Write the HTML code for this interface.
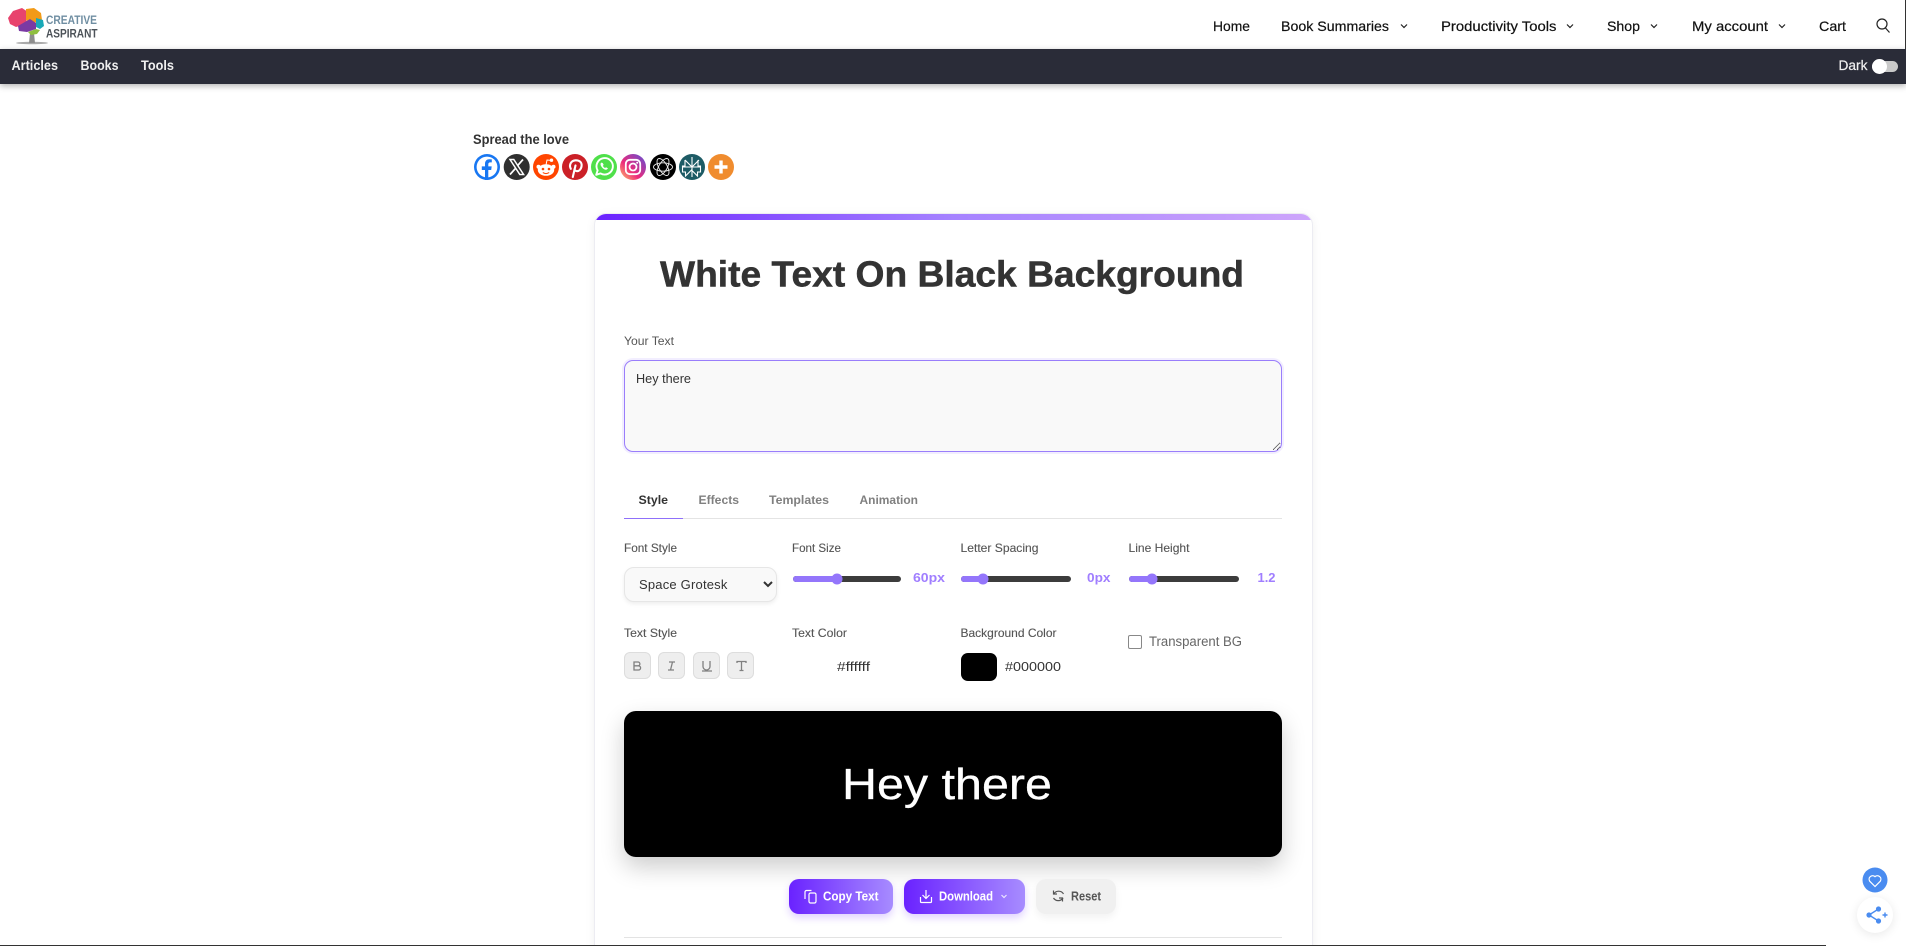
<!DOCTYPE html>
<html lang="en"><head><meta charset="utf-8"><title>White Text On Black Background</title>
<style>
html,body{margin:0;padding:0;background:#fff;width:1906px;height:946px;overflow:hidden}
body{position:relative;font-family:"Liberation Sans",sans-serif}
svg.p{position:absolute;left:0;top:0}
.a{position:absolute;box-sizing:border-box}
#bar{left:0;top:49px;width:1906px;height:35px;background:#2a2c38;box-shadow:0 2px 6px rgba(0,0,0,.3)}
#card{left:594px;top:213px;width:719px;height:760px;background:#fff;border-radius:12px;border:1px solid #ececf2;box-shadow:0 2px 10px rgba(0,0,0,.06);overflow:hidden}
#card i{display:block;height:5.5px;background:linear-gradient(90deg,#6a22ff,#a582ff 50%,#cda5fb)}
textarea{left:624px;top:360px;width:658px;height:92px;border:1.5px solid #9a7efb;border-radius:9px;background:#f9f9f9;box-shadow:0 0 0 2px rgba(148,118,251,.12);margin:0;padding:0;outline:0;color:transparent;resize:both}
select{left:624px;top:567px;width:153px;height:35px;border:1px solid #e6e6e6;border-radius:10px;background:#f9f9f9;box-shadow:0 2px 4px rgba(0,0,0,.07);padding:0 0 0 10px;font:13px "Liberation Sans",sans-serif;color:#333;letter-spacing:.2px}
#prev{left:624px;top:711px;width:658px;height:146px;background:#000;border-radius:12px;box-shadow:0 10px 24px rgba(0,0,0,.2)}
.b{top:879px;height:35px;border-radius:10px;background:linear-gradient(90deg,#6a22ff,#a78cff);box-shadow:0 4px 8px rgba(106,34,255,.2)}
.s{top:652px;width:27px;height:27px;background:#eee;border:1px solid #ddd;border-radius:6px}
</style></head><body>
<div class="a" id="bar"></div>
<div class="a" id="card"><i></i></div>
<textarea class="a">Hey there</textarea>
<select class="a"><option>Space Grotesk</option></select>
<div class="a" id="prev"></div>
<div class="a b" style="left:789px;width:104px"></div>
<div class="a b" style="left:904px;width:121px"></div>
<div class="a b" style="left:1036px;width:80px;background:#f0f0f0;box-shadow:0 4px 8px rgba(0,0,0,.05)"></div>
<div class="a s" style="left:624px"></div><div class="a s" style="left:658px"></div><div class="a s" style="left:693px"></div><div class="a s" style="left:727px"></div>
<div class="a" style="left:961px;top:653px;width:36px;height:28px;background:#000;border-radius:7px"></div>
<div class="a" style="left:1128px;top:635px;width:14px;height:14px;border:1px solid #888;border-radius:2px;background:#fff"></div>
<div class="a" style="left:1857px;top:897px;width:36px;height:36px;border-radius:50%;background:#fff;box-shadow:0 2px 10px rgba(0,0,0,.09)"></div>

<svg class="p" width="1906" height="946" viewBox="0 0 1906 946" xmlns="http://www.w3.org/2000/svg" font-family="'Liberation Sans',sans-serif">
<defs>
<linearGradient id="ig" x1="0" y1="1" x2="1" y2="0"><stop offset="0" stop-color="#fdc468"/><stop offset=".4" stop-color="#ee2a7b"/><stop offset="1" stop-color="#5b51d8"/></linearGradient>
</defs>

<!-- logo -->
<g>
<ellipse cx="32" cy="43" rx="16" ry="1.2" fill="#aaa"/>
<path d="M30 33h4l1 10h-6z" fill="#8d8d8d"/>
<path d="M8 18l5-7 9-3 6 4-2 12-10 3-6-3z" fill="#e8436d"/>
<path d="M26 9l8-1 7 5 1 7-8 3-8-3z" fill="#f29a17"/>
<path d="M18 26l12-7 6 4 0 6-9 3-8-1z" fill="#7a3aa3"/>
<path d="M36 18l7 2 1 6-4 3-4-2z" fill="#18a9b8"/>
<path d="M28 32l8-3 4 1-3 4-6 1z" fill="#8fbf3f"/>
<text x="46" y="24" font-size="11.5" font-weight="700" fill="#6f8ea2" textLength="51" lengthAdjust="spacingAndGlyphs">CREATIVE</text>
<text x="46" y="37.5" font-size="11.5" font-weight="700" fill="#4c5258" textLength="51.5" lengthAdjust="spacingAndGlyphs">ASPIRANT</text>
</g>

<!-- main nav -->
<g font-size="14" fill="#111" font-weight="400" stroke="#111" stroke-width=".2">
<text x="1213" y="31" textLength="37" lengthAdjust="spacingAndGlyphs">Home</text>
<text x="1281" y="31" textLength="108" lengthAdjust="spacingAndGlyphs">Book Summaries</text>
<text x="1441" y="31" textLength="115.5" lengthAdjust="spacingAndGlyphs">Productivity Tools</text>
<text x="1607" y="31" textLength="33" lengthAdjust="spacingAndGlyphs">Shop</text>
<text x="1692" y="31" textLength="76" lengthAdjust="spacingAndGlyphs">My account</text>
<text x="1819" y="31" textLength="27" lengthAdjust="spacingAndGlyphs">Cart</text>
</g>
<g fill="none" stroke="#222" stroke-width="1.2">
<path d="M1401 24.5l3 3 3-3M1567 24.5l3 3 3-3M1651 24.5l3 3 3-3M1779 24.5l3 3 3-3"/>
<circle cx="1882" cy="24" r="5"/><path d="M1885.5 28l4 4.5"/>
</g>

<!-- sub nav -->
<g font-size="13.5" font-weight="700" fill="#f0f0f0">
<text x="11.5" y="70" textLength="46.5" lengthAdjust="spacingAndGlyphs">Articles</text>
<text x="80.5" y="70" textLength="38" lengthAdjust="spacingAndGlyphs">Books</text>
<text x="141" y="70" textLength="33" lengthAdjust="spacingAndGlyphs">Tools</text>
<text x="1838.5" y="70" font-weight="400" stroke="#f0f0f0" stroke-width=".2" textLength="29" lengthAdjust="spacingAndGlyphs">Dark</text>
</g>
<rect x="1872" y="61" width="26" height="11" rx="5.5" fill="#c9c9c9"/>
<circle cx="1879.5" cy="66.5" r="7.5" fill="#fff"/>

<!-- spread the love -->
<text x="473" y="144" font-size="13.5" font-weight="700" fill="#333" textLength="96" lengthAdjust="spacingAndGlyphs">Spread the love</text>
<circle cx="487" cy="167" r="13" fill="#1877f2"/><circle cx="487" cy="167" r="10.4" fill="#fff"/>
<path d="M485 180v-10h-3.2v-3.6H485v-2.6c0-3 1.8-4.6 4.4-4.6l2.4.2v3h-1.6c-1.4 0-1.9.9-1.9 1.9v2.1h3.4l-.5 3.6h-2.9v10z" fill="#1877f2"/>
<circle cx="516.7" cy="167" r="13" fill="#2f2f2f"/>
<path d="M510 159.5h3.8l9.8 15h-3.8z" fill="none" stroke="#fff" stroke-width="1.5"/><path d="M523 159.5l-5.6 6.3M515.6 168.3l-5.6 6.2" stroke="#fff" stroke-width="1.7"/>
<circle cx="546" cy="167" r="13" fill="#ff4500"/>
<ellipse cx="546" cy="170" rx="8.2" ry="5.8" fill="#fff"/><circle cx="538.5" cy="166.8" r="2" fill="#fff"/><circle cx="553.5" cy="166.8" r="2" fill="#fff"/>
<circle cx="551.5" cy="160.2" r="1.7" fill="#fff"/><path d="M546 165l1-5 4 .4" fill="none" stroke="#fff" stroke-width="1"/>
<circle cx="543" cy="169" r="1.3" fill="#ff4500"/><circle cx="549" cy="169" r="1.3" fill="#ff4500"/><path d="M542.8 172.6q3.2 2 6.4 0" fill="none" stroke="#ff4500" stroke-width="1"/>
<circle cx="575" cy="167" r="13" fill="#cb2027"/>
<path d="M572.8 177l2.7-11.5M570.8 168.8c-2.2-4.2.5-8.3 4.8-8.5 4-.2 6.4 2.2 6 5.6-.4 3.4-2.6 5.6-5 5.2-1.2-.2-2-1-2.2-1.8" fill="none" stroke="#fff" stroke-width="2.1" stroke-linecap="round"/>
<circle cx="604" cy="167" r="13" fill="#4fe04a"/>
<path d="M596.2 174.8l1.4-4.4a8.2 8.2 0 1 1 3 3z" fill="none" stroke="#fff" stroke-width="1.9" stroke-linejoin="round"/>
<path d="M601.2 162.6c-.8.8-1 2 0 3.6 1 1.7 2.5 3 4.2 3.5 1.2.3 2.2-.4 2.5-1.4l-1.9-1.1-.9.8c-1-.4-1.8-1.2-2.2-2.2l.8-.9-1-1.9z" fill="#fff"/>
<circle cx="633" cy="167" r="13" fill="url(#ig)"/>
<rect x="625.8" y="159.8" width="14.4" height="14.4" rx="4" fill="none" stroke="#fff" stroke-width="1.8"/><circle cx="633" cy="167" r="3.5" fill="none" stroke="#fff" stroke-width="1.8"/><circle cx="637.2" cy="162.8" r="1" fill="#fff"/>
<circle cx="663" cy="167" r="13" fill="#000"/>
<g fill="none" stroke="#eee" stroke-width=".9"><ellipse cx="663" cy="167" rx="9.5" ry="4.2"/><ellipse cx="663" cy="167" rx="9.5" ry="4.2" transform="rotate(60 663 167)"/><ellipse cx="663" cy="167" rx="9.5" ry="4.2" transform="rotate(120 663 167)"/></g>
<circle cx="692" cy="167" r="13" fill="#1d5b65"/>
<path d="M692 157v20M685 160l7 7 7-7M685 160v6l-2.500 0v6l3 0v4l6-6 6 6v-4l3 0v-6l-2.500 0v-6M692 167l-9 0M692 167l9 0" fill="none" stroke="#fff" stroke-width="1.100"/>
<circle cx="721" cy="167" r="13" fill="#f08c2e"/><path d="M721 160.500v13M714.500 167h13" stroke="#fff" stroke-width="3.400"/>

<!-- title -->
<text x="660" y="286.500" font-size="36" font-weight="700" fill="#333" stroke="#333" stroke-width=".5" textLength="584" lengthAdjust="spacingAndGlyphs">White Text On Black Background</text>

<text x="624" y="345" font-size="12" fill="#555" textLength="50" lengthAdjust="spacingAndGlyphs">Your Text</text>
<text x="636" y="383" font-size="12.500" fill="#333" textLength="55" lengthAdjust="spacingAndGlyphs">Hey there</text>

<!-- tabs -->
<g font-size="12.300" font-weight="700" fill="#808080">
<text x="638.500" y="504" fill="#333" textLength="29.500" lengthAdjust="spacingAndGlyphs">Style</text>
<text x="698.500" y="504" textLength="40.500" lengthAdjust="spacingAndGlyphs">Effects</text>
<text x="769" y="504" textLength="60" lengthAdjust="spacingAndGlyphs">Templates</text>
<text x="859.500" y="504" textLength="58.500" lengthAdjust="spacingAndGlyphs">Animation</text>
</g>
<rect x="624" y="518" width="658" height="1" fill="#e4e4e4"/>
<rect x="624" y="518" width="59" height="1" fill="#8f70fa"/>

<!-- labels -->
<g font-size="12" fill="#555" stroke="#555" stroke-width=".12">
<text x="624" y="552" textLength="53" lengthAdjust="spacingAndGlyphs">Font Style</text>
<text x="792" y="552" textLength="49" lengthAdjust="spacingAndGlyphs">Font Size</text>
<text x="960.500" y="552" textLength="78" lengthAdjust="spacingAndGlyphs">Letter Spacing</text>
<text x="1128.500" y="552" textLength="61" lengthAdjust="spacingAndGlyphs">Line Height</text>
<text x="624" y="637" textLength="53" lengthAdjust="spacingAndGlyphs">Text Style</text>
<text x="792" y="637" textLength="55" lengthAdjust="spacingAndGlyphs">Text Color</text>
<text x="960.500" y="637" textLength="96" lengthAdjust="spacingAndGlyphs">Background Color</text>
</g>

<!-- sliders -->
<g>
<rect x="793" y="576" width="108" height="6" rx="3" fill="#3c3c3c"/><rect x="793" y="576" width="44" height="6" rx="3" fill="#9476fb"/><circle cx="837" cy="579" r="5.500" fill="#9476fb"/>
<rect x="961" y="576" width="110" height="6" rx="3" fill="#3c3c3c"/><rect x="961" y="576" width="22" height="6" rx="3" fill="#9476fb"/><circle cx="983" cy="579" r="5.500" fill="#9476fb"/>
<rect x="1129" y="576" width="110" height="6" rx="3" fill="#3c3c3c"/><rect x="1129" y="576" width="23" height="6" rx="3" fill="#9476fb"/><circle cx="1152" cy="579" r="5.500" fill="#9476fb"/>
</g>
<g font-size="13" font-weight="700" fill="#a07eff">
<text x="913" y="582" textLength="32" lengthAdjust="spacingAndGlyphs">60px</text>
<text x="1087" y="582" textLength="23.500" lengthAdjust="spacingAndGlyphs">0px</text>
<text x="1257.500" y="582" textLength="18" lengthAdjust="spacingAndGlyphs">1.2</text>
</g>

<!-- style icons -->
<g fill="none" stroke="#808080" stroke-width="1.300">
<path d="M634 662h4a1.900 1.900 0 0 1 0 3.800h-4zM634 665.800h4.500a2 2 0 0 1 0 4.200h-4.500z"/>
<path d="M669 662h6M668 670h6M672.500 662l-2 8"/>
<path d="M703 661v5.500a3.500 3.500 0 0 0 7 0V661M702 671h10"/>
<path d="M737 663v-1.500h9v1.500M741.500 661.500v9M739.500 670.500h4"/>
</g>
<text x="837" y="671" font-size="13" fill="#333" textLength="33" lengthAdjust="spacingAndGlyphs">#ffffff</text>
<text x="1005" y="671" font-size="13" fill="#333" textLength="56" lengthAdjust="spacingAndGlyphs">#000000</text>
<text x="1149" y="646" font-size="13.500" fill="#666" textLength="93" lengthAdjust="spacingAndGlyphs">Transparent BG</text>

<!-- preview text -->
<text x="842" y="799" font-size="44" fill="#fff" stroke="#fff" stroke-width=".3" textLength="210" lengthAdjust="spacingAndGlyphs">Hey there</text>

<!-- buttons -->
<g fill="none" stroke="#fff" stroke-width="1.200">
<rect x="809" y="893" width="7" height="10" rx="1.500"/><path d="M805 899v-7a1.500 1.500 0 0 1 1.500-1.500h5"/>
<path d="M926 890v8.500M922.500 895l3.500 3.500 3.500-3.500M920.500 897v4.500a1 1 0 0 0 1 1h9a1 1 0 0 0 1-1V897"/>
<path d="M1001.500 895l2.500 2.500 2.500-2.500" stroke-opacity=".8"/>
</g>
<g font-size="12.500" font-weight="700" fill="#fff">
<text x="823" y="900.500" textLength="55.500" lengthAdjust="spacingAndGlyphs">Copy Text</text>
<text x="939" y="900.500" textLength="54" lengthAdjust="spacingAndGlyphs">Download</text>
</g>
<text x="1071" y="900.500" font-size="12.500" font-weight="700" fill="#555" textLength="30" lengthAdjust="spacingAndGlyphs">Reset</text>
<g fill="none" stroke="#555" stroke-width="1.200"><path d="M1053.500 890.500v3.500h3.500M1053.800 894a5.600 5.600 0 0 1 9.700 0M1062.500 901.500v-3.500h-3.500"/><path d="M1063 898a5.600 5.600 0 0 1-9.500 0"/></g>

<rect x="624" y="937" width="658" height="1" fill="#e3e3e3"/>

<!-- floating -->
<circle cx="1875" cy="880" r="12.500" fill="#4a8cf0"/>
<path d="M1875 886.500l-5.300-5.300a3.500 3.500 0 0 1 5.300-4.500 3.500 3.500 0 0 1 5.300 4.500z" fill="none" stroke="#fff" stroke-width="1.200"/>
<g fill="#4a8cf0"><circle cx="1869" cy="915" r="2.600"/><circle cx="1878.500" cy="909" r="2.600"/><circle cx="1878.500" cy="921" r="2.600"/></g>
<path d="M1878.500 909l-9.500 6 9.500 6M1882.500 915h5M1885 912.500v5" fill="none" stroke="#4a8cf0" stroke-width="1.400"/>

<!-- window edge -->
<rect x="0" y="945" width="1826" height="1" fill="#333"/>
<rect x="1905" y="0" width="1" height="49" fill="#333"/>
</svg>
</body></html>
